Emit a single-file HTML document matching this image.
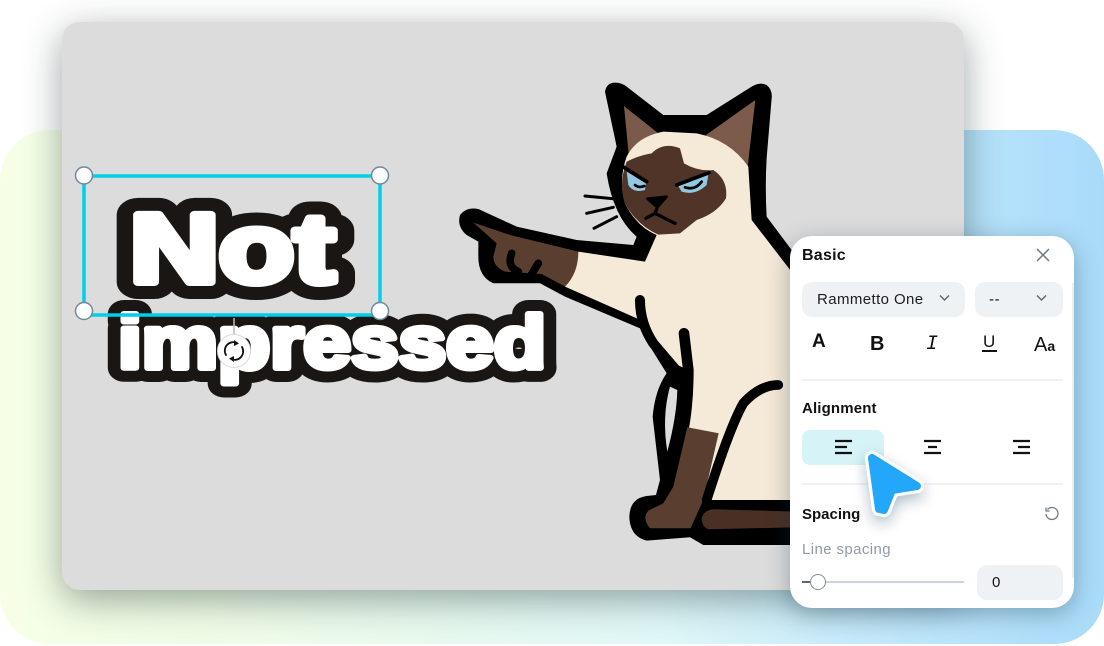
<!DOCTYPE html>
<html><head><meta charset="utf-8"><style>
html,body{margin:0;padding:0;background:#fff}
body{width:1104px;height:646px;position:relative;overflow:hidden;font-family:"Liberation Sans",sans-serif;color:#111}
.abs{position:absolute}
#bg{left:0;top:130px;width:1104px;height:514px;border-radius:50px;background:linear-gradient(90deg,#f6ffe6 0,#f0fce7 20%,#e0f8f8 60%,#bfe7fb 82%,#a9dbf9 100%)}
#card{left:62px;top:22px;width:902px;height:568px;border-radius:18px;background:#dcdcdc;box-shadow:0 10px 38px rgba(20,40,40,.42)}
#panel{left:790px;top:236px;width:284px;height:372px;border-radius:22px;background:#fff;box-shadow:0 6px 24px rgba(20,50,70,.35)}
.t{position:absolute;white-space:nowrap}
.sel{position:absolute;background:#eff2f5;border-radius:10px}
.hr{position:absolute;left:12px;width:261px;height:2px;background:#f0f2f4}
</style></head><body>
<div id="bg" class="abs"></div>
<div id="card" class="abs"></div>
<svg class="abs" style="left:0;top:0" width="1104" height="646" viewBox="0 0 1104 646">
<g transform="translate(450,70) scale(.3333)" stroke-linejoin="round" stroke-linecap="round">
<path d="M465,65Q470,38 495,38Q515,38 530,50L640,135L770,135L905,50Q930,35 950,45Q968,60 965,85L950,265Q945,350 950,440L1040,560L1040,1425L760,1425L720,1402L590,1412Q540,1400 538,1340Q540,1285 590,1278L618,1275L630,1230L608,1040Q615,960 650,910L600,830L570,775L345,680L270,640L130,640Q85,620 85,560L85,515L50,495Q20,470 30,435Q50,410 85,417L200,470L380,510L550,525L560,500Q490,440 470,310L500,230Z" fill="#000"/>
<path d="M522,108L625,190L560,290L537,262Z" fill="#7a5a4a"/>
<path d="M916,90L892,300L800,260L768,195Z" fill="#7d5b4a"/>
<path d="M530,260Q560,200 640,185L740,190Q840,210 895,290L905,450L1040,625L1040,1290L760,1290L715,1070L715,900L650,870L560,745L345,650L385,545L585,575L620,495Q560,470 525,400Q505,330 530,260Z" fill="#f5e9d8"/>
<path d="M605,250Q640,215 690,235L702,280Q745,305 790,300Q835,330 828,385Q800,430 740,450L690,490L625,494Q560,465 525,400Q505,340 530,275Q570,255 605,250Z" fill="#4f3427"/>
<path d="M530,305L588,340L585,360Q550,370 535,345Z" fill="#8fc9e3"/>
<path d="M775,315L770,345Q735,378 695,365L683,345Z" fill="#8fc9e3"/>
<path d="M522,292L590,335M777,308L680,345" stroke="#000" stroke-width="11" fill="none"/>
<path d="M555,345Q565,355 583,348M705,352Q735,362 755,335" stroke="#000" stroke-width="8" fill="none"/>
<path d="M592,386L650,380L622,412Z" fill="#000" stroke="#000" stroke-width="8"/>
<path d="M622,412L615,430L588,445M615,430L675,460" fill="none" stroke="#000" stroke-width="10"/>
<path d="M405,378L510,388M410,430L490,412M432,475L500,440" fill="none" stroke="#000" stroke-width="9"/>
<path d="M70,458L180,495L385,545Q385,610 345,650L275,612L165,605Q130,590 130,560L140,520Z" fill="#5a3e30"/>
<path d="M185,550Q170,590 205,605M265,580L245,612" fill="none" stroke="#000" stroke-width="23"/>
<path d="M570,690Q570,760 610,820L695,920" fill="none" stroke="#000" stroke-width="30"/>
<path d="M702,790L715,900Q715,1000 700,1080" fill="none" stroke="#000" stroke-width="32"/>
<path d="M660,950Q635,1040 652,1145Q680,1040 682,960Z" fill="#dcdcdc"/>
<path d="M712,1072L806,1090L760,1290L722,1375L600,1375Q575,1345 595,1322L640,1300L670,1250Z" fill="#5a3e30"/>
<path d="M985,945Q930,945 880,1000Q840,1070 770,1290" fill="none" stroke="#000" stroke-width="29"/>
<path d="M755,1345Q760,1322 790,1318L1040,1325L1040,1372L775,1378Q755,1370 755,1345Z" fill="#4a3024"/>
</g>
<g font-family="Liberation Sans" font-weight="bold" stroke-linejoin="round" stroke-linecap="round">
<text x="130" y="282" font-size="97" textLength="205" lengthAdjust="spacingAndGlyphs" fill="#1a1614" stroke="#1a1614" stroke-width="34">Not</text>
<text x="130" y="282" font-size="97" textLength="205" lengthAdjust="spacingAndGlyphs" fill="#fff" stroke="#fff" stroke-width="8">Not</text>
<text x="118" y="368" font-size="74" textLength="428" lengthAdjust="spacingAndGlyphs" fill="#1a1614" stroke="#1a1614" stroke-width="28">impressed</text>
<text x="118" y="368" font-size="74" textLength="428" lengthAdjust="spacingAndGlyphs" fill="#fff" stroke="#fff" stroke-width="6">impressed</text>
</g>
<rect x="84" y="176" width="296" height="139" fill="none" stroke="#00cfe8" stroke-width="3.5"/>
<g fill="#fff" stroke="#73889c" stroke-width="1.5">
<circle cx="84" cy="175.500" r="8.500"/><circle cx="380" cy="175.500" r="8.500"/><circle cx="84" cy="311" r="8.500"/><circle cx="380" cy="311" r="8.500"/>
</g>
<path d="M234,318V336" stroke="#bbb" stroke-width="1.500"/>
<circle cx="234" cy="351" r="16.500" fill="#fff" stroke="#d9d9d9" stroke-width="1"/>
<g fill="none" stroke="#111" stroke-width="1.800" stroke-linecap="round">
<path d="M226,355A8.500,8.500 0 0 1 237,343"/><path d="M242,347A8.500,8.500 0 0 1 231,359"/>
</g>
<path d="M234,340L239,343.500L234,346ZM234,356L229,358.500L234,362Z" fill="#111"/>
</svg>
<div id="panel" class="abs">
<div class="abs" style="left:282px;top:47px;width:2px;height:295px;background:#eceef0"></div>
<div class="t" style="left:12px;top:11px;font-size:16px;font-weight:bold;letter-spacing:.25px">Basic</div>
<svg class="abs" style="left:246px;top:12px" width="14" height="14"><path d="M1,1L13,13M13,1L1,13" stroke="#6e7a86" stroke-width="1.500" fill="none"/></svg>
<div class="sel" style="left:12px;top:46px;width:163px;height:35px"></div>
<div class="sel" style="left:185px;top:46px;width:88px;height:35px"></div>
<div class="t" style="left:27px;top:55px;font-size:15px;letter-spacing:.4px;color:#1c1c1c">Rammetto One</div>
<div class="t" style="left:199px;top:55px;font-size:15px;letter-spacing:.6px">--</div>
<svg class="abs" style="left:149px;top:58px" width="12" height="9"><path d="M1,1.500L5.500,6L10,1.500" stroke="#5a6570" stroke-width="1.400" fill="none"/></svg>
<svg class="abs" style="left:246px;top:58px" width="12" height="9"><path d="M1,1.500L5.500,6L10,1.500" stroke="#5a6570" stroke-width="1.400" fill="none"/></svg>
<div class="t" style="left:22px;top:95px;font-size:19px;font-weight:bold">A</div>
<div class="t" style="left:80px;top:97px;font-size:20px;font-weight:bold">B</div>
<div class="t" style="left:136px;top:97px;font-size:20px;font-style:italic;font-family:'Liberation Mono',monospace">I</div>
<div class="t" style="left:193px;top:96px;font-size:17px">U</div>
<div class="abs" style="left:192px;top:114px;width:15px;height:2px;background:#111"></div>
<div class="t" style="left:244px;top:98px;font-size:20px">A<span style="font-size:14px;font-weight:bold">a</span></div>
<div class="hr" style="top:143px"></div>
<div class="t" style="left:12px;top:164px;font-size:15px;font-weight:bold;letter-spacing:.15px">Alignment</div>
<div class="abs" style="left:12px;top:194px;width:82px;height:35px;background:#d6f3f8;border-radius:8px"></div>
<svg class="abs" style="left:0;top:0" width="284" height="372" fill="none" stroke="#111" stroke-width="2.300">
<path d="M45,205H62M45,211H57M45,217H62"/><path d="M134,205H151M138,211H147M134,217H151"/><path d="M223,205H240M228,211H240M223,217H240"/>
</svg>
<div class="hr" style="top:247px"></div>
<div class="t" style="left:12px;top:270px;font-size:15px;font-weight:bold;letter-spacing:0">Spacing</div>
<svg class="abs" style="left:254px;top:270px" width="16" height="16" fill="none" stroke="#6e7a86" stroke-width="1.300"><path d="M3.500,3.500A6,6 0 1 1 2,8"/><path d="M2,1.500V5H5.500" stroke-linejoin="round"/></svg>
<div class="t" style="left:12px;top:305px;font-size:15px;color:#8f9aa8;letter-spacing:.4px">Line spacing</div>
<div class="abs" style="left:12px;top:345px;width:162px;height:2px;background:#cdd6e0"></div>
<div class="abs" style="left:12px;top:345px;width:10px;height:2px;background:#5a6a7a"></div>
<div class="abs" style="left:20px;top:338px;width:14px;height:14px;border-radius:50%;background:#fff;border:1px solid #7d8b9a"></div>
<div class="sel" style="left:187px;top:329px;width:86px;height:35px"></div>
<div class="t" style="left:202px;top:338px;font-size:15px">0</div>
</div>
<svg class="abs" style="left:0;top:0;overflow:visible" width="1104" height="646">
<defs><filter id="s" x="-50%" y="-50%" width="200%" height="200%"><feDropShadow dx="0" dy="6" stdDeviation="7" flood-color="#0a3050" flood-opacity=".3"/></filter></defs>
<path d="M872,458L917,486L892,490L884,510L879,509Z" fill="#fff" stroke="#fff" stroke-width="14" stroke-linejoin="round" filter="url(#s)"/>
<path d="M872,458L917,486L892,490L884,510L879,509Z" fill="#22a7fb" stroke="#22a7fb" stroke-width="8" stroke-linejoin="round"/>
</svg>
</body></html>
